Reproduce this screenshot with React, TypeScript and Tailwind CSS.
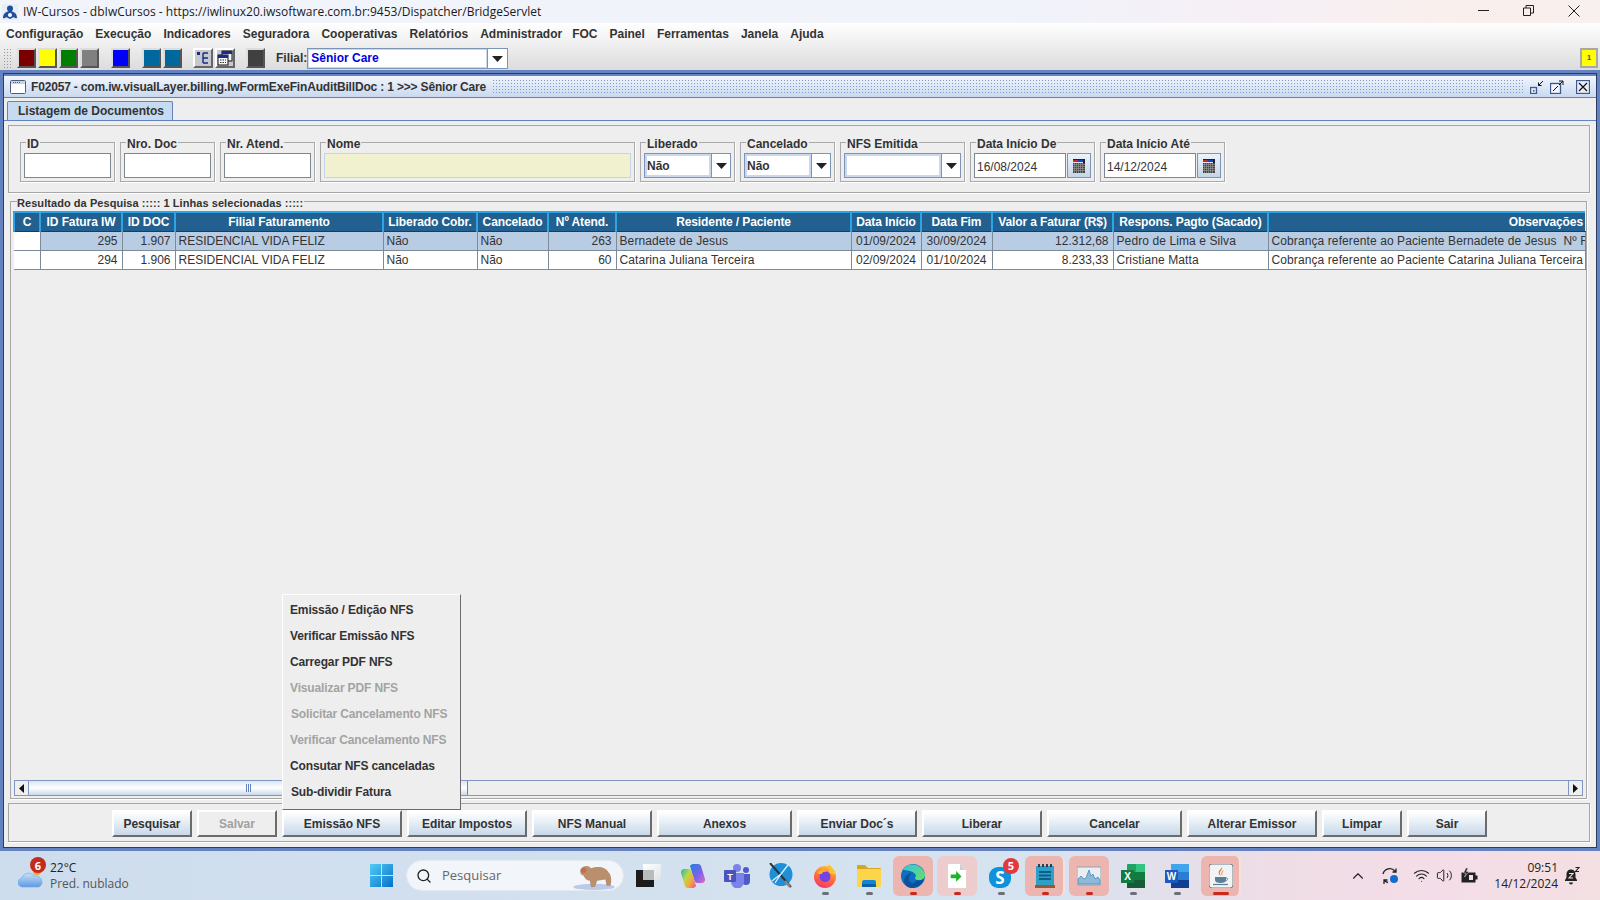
import type { ReactNode } from "react";
import { ChevronUp, Search, Volume2, Wifi } from "lucide-react";

const menus = ["Configuração", "Execução", "Indicadores", "Seguradora", "Cooperativas", "Relatórios", "Administrador", "FOC", "Painel", "Ferramentas", "Janela", "Ajuda"];

const columns = [
  { label: "C", width: 26 },
  { label: "ID Fatura IW", width: 82 },
  { label: "ID DOC", width: 53 },
  { label: "Filial Faturamento", width: 208 },
  { label: "Liberado Cobr.", width: 94 },
  { label: "Cancelado", width: 71 },
  { label: "Nº Atend.", width: 68 },
  { label: "Residente / Paciente", width: 235 },
  { label: "Data Início", width: 70 },
  { label: "Data Fim", width: 71 },
  { label: "Valor a Faturar (R$)", width: 121 },
  { label: "Respons. Pagto (Sacado)", width: 155 },
  { label: "Observações", width: 317 },
];

const rows = [
  ["", "295", "1.907", "RESIDENCIAL VIDA FELIZ", "Não", "Não", "263", "Bernadete de Jesus", "01/09/2024", "30/09/2024", "12.312,68", "Pedro de Lima e Silva", "Cobrança referente ao Paciente Bernadete de Jesus  Nº F"],
  ["", "294", "1.906", "RESIDENCIAL VIDA FELIZ", "Não", "Não", "60", "Catarina Juliana Terceira", "02/09/2024", "01/10/2024", "8.233,33", "Cristiane Matta", "Cobrança referente ao Paciente Catarina Juliana Terceira"],
];
const rightAligned = [1, 2, 6, 10];
const centered = [8, 9];
const wideText = [7, 11, 12];

const buttons = [
  { label: "Pesquisar", width: "w-[80px]" },
  { label: "Salvar", width: "w-[80px]", disabled: true },
  { label: "Emissão NFS", width: "w-[120px]" },
  { label: "Editar Impostos", width: "w-[120px]" },
  { label: "NFS Manual", width: "w-[120px]" },
  { label: "Anexos", width: "w-[135px]" },
  { label: "Enviar Doc´s", width: "w-[120px]" },
  { label: "Liberar", width: "w-[120px]" },
  { label: "Cancelar", width: "w-[135px]" },
  { label: "Alterar Emissor", width: "w-[130px]" },
  { label: "Limpar", width: "w-[80px]" },
  { label: "Sair", width: "w-[80px]" },
];

const popupItems = [
  { label: "Emissão / Edição NFS" },
  { label: "Verificar Emissão NFS" },
  { label: "Carregar PDF NFS" },
  { label: "Visualizar PDF NFS", disabled: true },
  { label: "Solicitar Cancelamento NFS", disabled: true, nudge: true },
  { label: "Verificar Cancelamento NFS", disabled: true },
  { label: "Consutar NFS canceladas" },
  { label: "Sub-dividir Fatura", nudge: true },
];

function Swatch({ color, className = "" }: { color: string; className?: string }) {
  return (
    <div className={`h-[20px] w-[19px] border-2 border-t-[#dddddd] border-l-[#dddddd] border-r-[#555555] border-b-[#555555] ${color} ${className}`} />
  );
}

function ToolIcon({ children, className = "" }: { children: ReactNode; className?: string }) {
  return (
    <div className={`flex h-[20px] w-[20px] items-center justify-center border-2 border-t-white border-l-white border-r-[#666666] border-b-[#666666] bg-[#c4c8cf] ${className}`}>
      {children}
    </div>
  );
}

function ArrowDown() {
  return (
    <svg width="11" height="6" viewBox="0 0 11 6">
      <path d="M0 0h11L5.5 6z" fill="#222" />
    </svg>
  );
}

function Group({ label, width, children }: { label: string; width: string; children: ReactNode }) {
  return (
    <div className={`h-[40px] border border-[#aaaaaa] px-[3px] shadow-[1px_1px_0_#ffffff] ${width}`}>
      <span className="relative -mt-[6px] mb-[2px] ml-[2px] block h-[14px] w-fit bg-[#eeeeee] px-[1px] text-[12px] font-bold leading-[14px] text-[#333333]">
        {label}
      </span>
      {children}
    </div>
  );
}

function TextInput({ tone = "border-[#7c8794] bg-white" }: { tone?: string }) {
  return <div className={`h-[25px] w-full border ${tone}`} />;
}

function Combo({ value = "" }: { value?: string }) {
  return (
    <div className="flex h-[25px] w-full border border-[#7c94b8] bg-white">
      <div className="flex-1 border-2 border-[#c9d8ec] text-[12px] font-bold leading-[20px] text-[#333333]">{value}</div>
      <div className="flex w-[19px] items-center justify-center border-l border-[#7c94b8]">
        <ArrowDown />
      </div>
    </div>
  );
}

function CalendarIcon() {
  return (
    <svg width="14" height="14" viewBox="0 0 14 14">
      <rect x="1" y="0" width="12" height="1" fill="#222" />
      <rect x="1" y="1" width="5" height="2" fill="#d02020" />
      <rect x="6" y="1" width="5" height="2" fill="#2040c0" />
      <rect x="11" y="0" width="2" height="4" fill="#222" />
      <rect x="1" y="4" width="12" height="10" fill="#444" />
      <path d="M1 5.500h12M1 7.500h12M1 9.500h12M1 11.500h12M2.500 4v10M4.500 4v10M6.500 4v10M8.500 4v10M10.500 4v10" stroke="#9c9c9c" strokeWidth="0.6" />
    </svg>
  );
}

function DateField({ value }: { value: string }) {
  return (
    <div className="flex h-[25px] w-full items-stretch gap-[1px]">
      <div className="flex-1 border border-[#7c8794] bg-white pl-[2px] text-[12px] leading-[26px] text-[#333333]">{value}</div>
      <div className="flex w-[24px] items-center justify-center border border-[#7c94b8] bg-gradient-to-b from-[#eef3fa] to-[#c4d5e8]">
        <CalendarIcon />
      </div>
    </div>
  );
}

function Slot({ children, bg, dot, stack, wide }: { children: ReactNode; bg?: string; dot?: string; stack?: boolean; wide?: boolean }) {
  return (
    <div className="relative flex h-[49px] w-[44px] items-center justify-center">
      {stack && <span className="absolute left-[18px] top-[5px] h-[40px] w-[24px] rounded-r-[6px] border-r-[2px] border-white/60 bg-[#ecb5b0]" />}
      {bg && <span className={`absolute top-[5px] h-[40px] rounded-[6px] ${stack ? "left-[2px] w-[34px]" : "left-[2px] w-[40px]"} ${bg}`} />}
      <span className="relative flex items-center justify-center">{children}</span>
      {dot && <span className={`absolute bottom-[5px] h-[3px] rounded-full ${wide ? "w-[16px]" : "w-[7px]"} ${dot}`} />}
    </div>
  );
}

function WinLogo() {
  return (
    <svg width="23" height="23" viewBox="0 0 24 24">
      <defs>
        <linearGradient id="win" x1="0" y1="0" x2="1" y2="1">
          <stop offset="0" stopColor="#52cdf5" />
          <stop offset="1" stopColor="#0570cc" />
        </linearGradient>
      </defs>
      <path d="M0 0h11.5v11.5H0zM12.5 0H24v11.5H12.5zM0 12.5h11.5V24H0zM12.5 12.5H24V24H12.5z" fill="url(#win)" />
    </svg>
  );
}

function TaskView() {
  return (
    <svg width="26" height="24" viewBox="0 0 26 24">
      <defs>
        <linearGradient id="tv" x1="0" y1="0" x2="1" y2="1">
          <stop offset="0" stopColor="#ffffff" />
          <stop offset="1" stopColor="#dfe3e8" />
        </linearGradient>
      </defs>
      <rect x="7" y="0" width="18" height="16" fill="url(#tv)" />
      <rect x="0" y="6" width="18" height="17" fill="#1c1c1c" />
      <rect x="7" y="6" width="11" height="10" fill="#b9bbbd" />
    </svg>
  );
}

function Copilot() {
  return (
    <svg width="24" height="24" viewBox="0 0 24 24">
      <defs>
        <linearGradient id="cp1" x1="0" y1="0.2" x2="1" y2="0.9">
          <stop offset="0" stopColor="#3fbf8f" />
          <stop offset="0.35" stopColor="#bcd84a" />
          <stop offset="0.65" stopColor="#f5a83c" />
          <stop offset="1" stopColor="#ef5a7a" />
        </linearGradient>
        <linearGradient id="cp2" x1="0" y1="0" x2="1" y2="1">
          <stop offset="0" stopColor="#1f7fe0" />
          <stop offset="0.55" stopColor="#7b63e8" />
          <stop offset="1" stopColor="#dc6ac8" />
        </linearGradient>
      </defs>
      <path d="M9 2c1-1.500 2-2 4-2h4c1.500 0 2.500.8 3 2l4 13c.5 2-1 4-3 4h-5c-1 0-2-.7-2.400-2z" fill="url(#cp2)" />
      <path d="M15 22c-1 1.500-2 2-4 2H7c-1.500 0-2.500-.8-3-2L0 9c-.5-2 1-4 3-4h5c1 0 2 .7 2.400 2z" fill="url(#cp1)" />
    </svg>
  );
}

function Teams() {
  return (
    <svg width="26" height="24" viewBox="0 0 26 24">
      <circle cx="13" cy="4" r="4" fill="#7b83eb" />
      <circle cx="22" cy="6" r="3" fill="#5059c9" />
      <path d="M18 10h8v7a4 4 0 0 1-8 0z" fill="#5059c9" />
      <path d="M7 9h13v9a6.500 6.500 0 0 1-13 0z" fill="#7b83eb" />
      <rect x="0" y="6" width="12" height="12" rx="1" fill="#4b53bc" />
      <text x="6" y="15.500" textAnchor="middle" fontSize="9" fontWeight="700" fill="#ffffff" fontFamily="Liberation Sans">T</text>
    </svg>
  );
}

function Tools() {
  return (
    <svg width="24" height="25" viewBox="0 0 24 25">
      <circle cx="12" cy="11.500" r="11.500" fill="#1f8fd8" />
      <path d="M1 0l21 24" stroke="#333" strokeWidth="2" />
      <path d="M12 11L3 18M12 11l7-9M12 11L6 20" stroke="#dcefff" strokeWidth="1.300" />
      <path d="M16 18l5 6" stroke="#888" strokeWidth="2.500" />
    </svg>
  );
}

function Firefox() {
  return (
    <svg width="24" height="24" viewBox="0 0 24 24">
      <defs>
        <linearGradient id="ff" x1="0.7" y1="0" x2="0.3" y2="1">
          <stop offset="0" stopColor="#ffc22e" />
          <stop offset="0.5" stopColor="#ff7139" />
          <stop offset="1" stopColor="#f5326b" />
        </linearGradient>
      </defs>
      <circle cx="12" cy="13" r="11" fill="url(#ff)" />
      <path d="M15 0c3 2 7 6 8 11l-7-2c0-3 0-6-1-9z" fill="#ffc22e" />
      <circle cx="12" cy="12.500" r="5.500" fill="#7542e5" />
      <path d="M4 9c3-4 8-3 10-1-4-1-5 1-5 2-2 0-3 0-5-1z" fill="#ffb02e" />
    </svg>
  );
}

function Folder() {
  return (
    <svg width="24" height="24" viewBox="0 0 24 24">
      <path d="M0 2a1 1 0 0 1 1-1h7l3 3h12a1 1 0 0 1 1 1v2H0z" fill="#d9a520" />
      <path d="M0 5h24v17a1 1 0 0 1-1 1H1a1 1 0 0 1-1-1z" fill="#fdd54a" />
      <path d="M5 23v-5a2 2 0 0 1 2-2h10a2 2 0 0 1 2 2v5z" fill="#1187d4" />
      <rect x="5" y="20" width="14" height="3" fill="#0a5fa8" />
    </svg>
  );
}

function Edge() {
  return (
    <svg width="24" height="24" viewBox="0 0 24 24">
      <defs>
        <linearGradient id="edgeA" x1="0" y1="0" x2="1" y2="1">
          <stop offset="0" stopColor="#36c6d8" />
          <stop offset="1" stopColor="#6ade6a" />
        </linearGradient>
      </defs>
      <circle cx="12" cy="12" r="12" fill="#0d6fc0" />
      <path d="M2 6C6-2 20-2 24 10c.5 5-4 7-8 6-3-1-2-3-1-4 0-4-8-6-13-6z" fill="url(#edgeA)" />
      <path d="M16 16c3 1 6 0 7-2-1 6-7 10-12 10-4 0-8-3-8-8 1-4 4-7 8-7-2 1-3 3-3 6 0 5 5 5 8 1z" fill="#0b4f9e" />
    </svg>
  );
}

function DocArrow() {
  return (
    <svg width="18" height="24" viewBox="0 0 18 24">
      <path d="M0 0h12l6 6v18H0z" fill="#ffffff" />
      <path d="M12 0l6 6h-6z" fill="#cfcfcf" />
      <path d="M3 14h6v-4l6 6-6 6v-4H3z" fill="#1db324" transform="translate(0 -2) scale(.9)" />
    </svg>
  );
}

function Skype() {
  return (
    <div className="relative h-[24px] w-[24px]">
      <span className="absolute left-0 top-[3px] flex h-[21px] w-[22px] items-center justify-center rounded-[9px] bg-[#0e92dc] text-[17px] font-bold leading-none text-white">S</span>
      <span className="absolute -right-[6px] -top-[6px] flex h-[16px] w-[16px] items-center justify-center rounded-full bg-[#e23a3a] text-[11px] font-bold leading-none text-white">5</span>
    </div>
  );
}

function Notes() {
  return (
    <svg width="20" height="24" viewBox="0 0 20 24">
      <rect x="1" y="2" width="18" height="20" fill="#2ca0c8" />
      <path d="M4 0v3M8 0v3M12 0v3M16 0v3" stroke="#123" strokeWidth="1.600" />
      <path d="M4 8h12M4 11.500h12M4 15h12" stroke="#0c5f85" strokeWidth="2" />
      <rect x="0" y="21" width="20" height="3" fill="#9c5a28" />
    </svg>
  );
}

function Monitor() {
  return (
    <svg width="24" height="24" viewBox="0 0 24 24">
      <rect x="0" y="3" width="24" height="18" fill="#e8eef2" stroke="#8fa3ad" />
      <path d="M1 20V15l3-3 3 3 2-1 3-8 2 6 2-2 2 5 3-2 2 3v4z" fill="#8db8d8" stroke="#4a8bbc" strokeWidth=".8" />
    </svg>
  );
}

function Excel() {
  return (
    <svg width="24" height="24" viewBox="0 0 24 24">
      <rect x="6" y="0" width="18" height="24" rx="1" fill="#21a366" />
      <rect x="15" y="0" width="9" height="8" fill="#33c481" />
      <rect x="6" y="8" width="18" height="8" fill="#107c41" />
      <rect x="6" y="16" width="18" height="8" fill="#185c37" />
      <rect x="0" y="6" width="13" height="13" fill="#107c41" />
      <text x="6.500" y="16" textAnchor="middle" fontSize="10" fontWeight="700" fill="#ffffff" fontFamily="Liberation Sans">X</text>
    </svg>
  );
}

function Word() {
  return (
    <svg width="24" height="24" viewBox="0 0 24 24">
      <rect x="6" y="0" width="18" height="24" rx="1" fill="#2b7cd3" />
      <rect x="6" y="0" width="18" height="8" fill="#41a5ee" />
      <rect x="6" y="16" width="18" height="8" fill="#103f91" />
      <rect x="0" y="6" width="13" height="13" fill="#185abd" />
      <text x="6.500" y="16" textAnchor="middle" fontSize="10" fontWeight="700" fill="#ffffff" fontFamily="Liberation Sans">W</text>
    </svg>
  );
}

function Java() {
  return (
    <svg width="24" height="24" viewBox="0 0 24 24">
      <rect x="0" y="0" width="24" height="24" rx="3" fill="#f1f3f5" stroke="#6f7f8b" />
      <path d="M13 3c1 3-3 4-2 7 .5 1 1 1.500 1 2-2-1-3-3-2-5 .5-1.500 2.500-2 3-4z" fill="#e8762d" />
      <path d="M15 6c-1 2-3 3-1 6-2-1-2-3-1-4.500.5-.5 1.500-1 2-1.500z" fill="#e8762d" />
      <path d="M6 13h11v3c0 2-2 3-5.500 3S6 18 6 16z" fill="#5a7f96" />
      <path d="M17 14c2 0 2 2.500-.5 3" stroke="#5a7f96" fill="none" />
      <path d="M4 20.500h15" stroke="#5a7f96" strokeWidth="1.200" />
    </svg>
  );
}

function Cloud() {
  return (
    <svg width="26" height="22" viewBox="0 0 26 22">
      <defs>
        <linearGradient id="cl" x1="0" y1="0" x2="0" y2="1">
          <stop offset="0" stopColor="#c8e0f8" />
          <stop offset="1" stopColor="#5e9ae0" />
        </linearGradient>
      </defs>
      <circle cx="19" cy="5" r="4" fill="#f0a030" />
      <path d="M5 21a4.500 4.500 0 0 1-1-9c1-5 9-7 12-2 4-1 8 2 8 6 0 3-2 5-4 5z" fill="url(#cl)" stroke="#6ea4e4" strokeWidth=".6" />
    </svg>
  );
}

function BatteryIcon() {
  return (
    <svg width="17" height="16" viewBox="0 0 17 16">
      <rect x="1" y="5" width="13" height="9" fill="#222" stroke="#222" />
      <rect x="3" y="7" width="9" height="5" fill="#f3dde6" />
      <rect x="3" y="7" width="5" height="5" fill="#222" />
      <rect x="14" y="7.500" width="2.500" height="4" fill="#222" />
      <path d="M5 0L2.500 5H5L3.500 9 8 3.500H5.500L7 0z" fill="#222" stroke="#f3dde6" strokeWidth=".5" />
    </svg>
  );
}

function BellZz() {
  return (
    <svg width="16" height="18" viewBox="0 0 16 18">
      <path d="M7 2.500c-3 0-4.500 2.300-4.500 5v3L1 13v1h12v-1l-1.500-2.500v-3c0-2.700-1.500-5-4.500-5z" fill="#222" />
      <path d="M5 15.500h4c0 1-1 2-2 2s-2-1-2-2z" fill="#222" />
      <path d="M5 6.500h4l-4 4.500h4" fill="none" stroke="#f3e0e2" strokeWidth="1.100" />
      <path d="M11.500.5h3.500l-3.500 4h3.500" fill="none" stroke="#222" strokeWidth="1.100" />
    </svg>
  );
}

export default function App() {
  return (
    <div className="relative flex h-[900px] w-[1600px] flex-col overflow-hidden bg-[#eeeeee] font-['Liberation_Sans',Arial,sans-serif]">
      {/* window title bar */}
      <div className="flex h-[23px] shrink-0 items-center bg-[linear-gradient(90deg,#f1f4fa_0%,#f1f3fa_65%,#f6eff5_80%,#f9efed_90%,#f8f0ee_100%)] font-['Open_Sans',sans-serif] text-[12px] text-[#1a1a1a]">
        <svg className="ml-[2px] mr-[5px]" width="16" height="16" viewBox="0 0 16 16">
          <rect width="16" height="16" fill="#e8eef6" />
          <circle cx="8" cy="4.500" r="3" fill="#1f4f9e" />
          <path d="M1 14c0-5 4-7 7-7s7 2 7 7c-2 1-3-1-3-1l-4 2-4-2s-1 2-3 1z" fill="#1f4f9e" />
          <circle cx="8" cy="11" r="2" fill="#ffffff" />
        </svg>
        <span>IW-Cursos - dbIwCursos - https://iwlinux20.iwsoftware.com.br:9453/Dispatcher/BridgeServlet</span>
        <div className="ml-auto mr-[3px] flex h-full pb-[2px]">
          <div className="flex w-[45px] items-center justify-center">
            <svg width="11" height="11" viewBox="0 0 11 11"><path d="M0 5.500h11" stroke="#222" /></svg>
          </div>
          <div className="flex w-[45px] items-center justify-center">
            <svg width="11" height="11" viewBox="0 0 11 11"><path d="M.5 3h7v7.500h-7zM3 3V.5h7.500V8H8" fill="none" stroke="#222" /></svg>
          </div>
          <div className="flex w-[46px] items-center justify-center">
            <svg width="12" height="12" viewBox="0 0 12 12"><path d="M.5.5l11 11M11.500.5l-11 11" stroke="#222" /></svg>
          </div>
        </div>
      </div>

      {/* menu and toolbar */}
      <div className="h-[47px] shrink-0 bg-gradient-to-b from-white to-[#dcdcdc]">
        <div className="flex h-[25px] items-center gap-[12px] pb-[4px] pl-[6px] text-[12px] font-bold text-[#333333]">
          {menus.map((m) => (
            <span key={m} className={m === "FOC" ? "-ml-[2px]" : ""}>{m}</span>
          ))}
        </div>
        <div className="flex h-[20px] items-start pl-[3px]">
          <div className="mr-[5px] h-[20px] w-[9px] bg-[radial-gradient(#9a9a9a_0.8px,transparent_1px)] bg-[length:3px_3px]" />
          <Swatch color="bg-[#7a0000]" />
          <Swatch color="bg-[#ffff00]" className="ml-[2px]" />
          <Swatch color="bg-[#008000]" className="ml-[2px]" />
          <Swatch color="bg-[#808080]" className="ml-[2px]" />
          <Swatch color="bg-[#0000ff]" className="ml-[12px]" />
          <Swatch color="bg-[#00689c]" className="ml-[12px]" />
          <Swatch color="bg-[#00689c]" className="ml-[2px]" />
          <ToolIcon className="ml-[11px]">
            <svg width="12" height="14" viewBox="0 0 12 14">
              <path d="M0 1h3v3H0z" fill="#1a2a80" />
              <path d="M6 2h5M6 2v10M6 7h5M6 12h5" fill="none" stroke="#1a2a80" strokeWidth="1.400" />
            </svg>
          </ToolIcon>
          <ToolIcon className="ml-[2px]">
            <svg width="16" height="16" viewBox="0 0 16 16">
              <rect x="5" y="1" width="10" height="10" fill="#f4f4f4" stroke="#111" />
              <rect x="5" y="1" width="10" height="3" fill="#1a2a90" />
              <rect x="1" y="5" width="10" height="10" fill="#f4f4f4" stroke="#111" />
              <rect x="1" y="5" width="10" height="3" fill="#1a2a90" />
              <path d="M3 10h6M3 12.500h6" stroke="#333" strokeDasharray="1.500 1" />
            </svg>
          </ToolIcon>
          <Swatch color="bg-[#404040]" className="ml-[11px]" />
          <span className="ml-[11px] text-[12px] font-bold leading-[20px] text-[#333333]">Filial:</span>
          <div className="flex h-[21px] w-[201px] border border-[#7c94b8] bg-white">
            <div className="flex-1 border border-[#c9d8ec] pl-[2px] text-[12px] font-bold leading-[17px] text-[#0000e0]">Sênior Care</div>
            <div className="flex w-[20px] items-center justify-center border-l border-[#7c94b8]">
              <ArrowDown />
            </div>
          </div>
          <div className="ml-auto mr-[2px] flex h-[20px] w-[18px] items-center justify-center border-2 border-[#a8a8a8] bg-[#ffff00] text-[8px] font-bold text-[#555555]">1</div>
        </div>
      </div>

      {/* internal frame */}
      <div className="flex min-h-0 flex-1 flex-col border-[3px] border-[#6382bf]">
        <div className="flex min-h-0 flex-1 flex-col border border-[#2c3d63] bg-[#eeeeee]">
          <div className="flex h-[24px] shrink-0 items-center border-y-2 border-b border-t-[#6382bf] border-b-[#6382bf] bg-gradient-to-b from-[#f2f6fc] to-[#c9d9ef] pl-[6px] text-[12px] font-bold text-[#333333]">
            <svg width="16" height="14" viewBox="0 0 16 14" className="mr-[5px]">
              <rect x=".5" y=".5" width="15" height="13" rx="1" fill="#ffffff" stroke="#50607a" />
              <rect x="1" y="1" width="14" height="3" fill="#c6d4e6" />
              <path d="M3 2.500h8" stroke="#50607a" strokeDasharray="1 1" />
            </svg>
            <span className="pt-[1px] tracking-[-0.17px]">F02057 - com.iw.visualLayer.billing.IwFormExeFinAuditBillDoc : 1 &gt;&gt;&gt; Sênior Care</span>
            <div className="ml-[6px] h-[15px] flex-1 bg-[radial-gradient(#7f9ccf_0.8px,transparent_1px)] bg-[length:3px_3px]" />
            <div className="ml-[5px] flex items-center">
              <svg width="14" height="14" viewBox="0 0 14 14">
                <rect x=".5" y="7.500" width="6" height="6" fill="#dfe8f5" stroke="#41588a" strokeWidth="1.300" />
                <rect x="3" y="10" width="1.500" height="1.500" fill="#41588a" />
                <path d="M13 1L8.500 5.500M8.500 2.500v3h3" fill="none" stroke="#111" />
              </svg>
              <svg width="14" height="14" viewBox="0 0 14 14" className="ml-[6px]">
                <rect x=".5" y="3.500" width="10" height="10" fill="#f2f6fc" stroke="#41588a" strokeWidth="1.300" />
                <path d="M3 11l5-5M9 1h4v4M13 1L9 5" fill="none" stroke="#111" />
              </svg>
              <svg width="14" height="14" viewBox="0 0 14 14" className="ml-[12px] mr-[6px]">
                <rect x=".5" y=".5" width="13" height="13" fill="#e8eef8" stroke="#41588a" strokeWidth="1.300" />
                <path d="M3 3l8 8M11 3l-8 8" stroke="#111" strokeWidth="1.200" />
              </svg>
            </div>
          </div>

          <div className="flex h-[22px] shrink-0 items-end pl-[3px]">
            <div className="flex h-[19px] w-[166px] items-center rounded-t-[2px] border border-b-0 border-[#6382bf] bg-[#c6daf0] pl-[10px] text-[12px] font-bold text-[#333333]">
              Listagem de Documentos
            </div>
          </div>

          <div className="flex min-h-0 flex-1 flex-col border-t border-[#6382bf] pl-[4px] pr-[6px] pt-[4px]">
            <div className="flex h-[68px] shrink-0 gap-[5px] border border-[#a6a6a6] pl-[11px] pt-[16px] shadow-[1px_1px_0_#ffffff]">
              <Group label="ID" width="w-[95px]"><TextInput /></Group>
              <Group label="Nro. Doc" width="w-[95px]"><TextInput /></Group>
              <Group label="Nr. Atend." width="w-[95px]"><TextInput /></Group>
              <Group label="Nome" width="w-[315px]"><TextInput tone="border-[#c5d5e8] bg-[#f1f1cf]" /></Group>
              <Group label="Liberado" width="w-[95px]"><Combo value="Não" /></Group>
              <Group label="Cancelado" width="w-[95px]"><Combo value="Não" /></Group>
              <Group label="NFS Emitida" width="w-[125px]"><Combo /></Group>
              <Group label="Data Início De" width="w-[125px]"><DateField value="16/08/2024" /></Group>
              <Group label="Data Início Até" width="w-[125px]"><DateField value="14/12/2024" /></Group>
            </div>

            <div className="ml-[2px] mr-[3px] mt-[8px] flex min-h-0 flex-1 flex-col border border-[#a6a6a6] pl-[2px] pr-[2px] shadow-[1px_1px_0_#ffffff]">
              <span className="relative -mt-[6px] ml-[4px] block h-[14px] w-fit bg-[#eeeeee] pr-[1px] text-[11px] font-bold leading-[14px] tracking-[0.06px] text-[#333333]">
                Resultado da Pesquisa ::::: 1 Linhas selecionadas :::::
              </span>
              <table className="mt-[1px] w-[1571px] table-fixed border-collapse text-[12px] text-[#333333]">
                <colgroup>
                  {columns.map((c) => (
                    <col key={c.label} style={{ width: c.width }} />
                  ))}
                </colgroup>
                <thead>
                  <tr>
                    {columns.map((c, i) => (
                      <th
                        key={c.label}
                        className={`h-[19px] overflow-hidden whitespace-nowrap border-l-2 border-t-2 border-b border-l-[#2ba5e8] border-t-[#2ba5e8] border-b-[#123f66] bg-[#21608f] p-0 text-[12px] font-bold tracking-[-0.1px] text-white ${i === columns.length - 1 ? "pr-[2px] text-right" : "text-center"}`}
                      >
                        {c.label}
                      </th>
                    ))}
                  </tr>
                </thead>
                <tbody>
                  {rows.map((row, r) => (
                    <tr key={r} className={r === 0 ? "bg-[#b8cce4]" : "bg-white"}>
                      {row.map((cell, i) => (
                        <td
                          key={i}
                          className={`h-[19px] overflow-hidden whitespace-pre border-b border-r border-[#7d8b99] py-0 leading-[18px] ${i === 0 ? "bg-white" : ""} ${rightAligned.includes(i) ? "px-[4px] text-right" : centered.includes(i) ? "px-0 text-center" : "px-[3px] text-left"} ${wideText.includes(i) ? "tracking-[0.1px]" : ""}`}
                        >
                          {cell}
                        </td>
                      ))}
                    </tr>
                  ))}
                </tbody>
              </table>

              <div className="mb-[2px] ml-[1px] mt-auto flex h-[16px] w-[1569px] border-y border-[#7f97c2]">
                <div className="flex w-[15px] items-center justify-center border-x border-[#7f97c2] bg-[#eeeeee]">
                  <svg width="5" height="9" viewBox="0 0 5 9"><path d="M5 0v9L0 4.500z" fill="#111" /></svg>
                </div>
                <div className="flex w-[439px] items-center justify-center border-r border-[#6382bf] bg-gradient-to-b from-[#dbe6f3] via-white to-[#c9d9ea]">
                  <div className="h-[8px] w-[5px] border-x border-[#6382bf] bg-[linear-gradient(90deg,transparent_40%,#6382bf_40%,#6382bf_60%,transparent_60%)]" />
                </div>
                <div className="flex-1" />
                <div className="flex w-[15px] items-center justify-center border-x border-[#7f97c2] bg-[#eeeeee]">
                  <svg width="5" height="9" viewBox="0 0 5 9"><path d="M0 0v9l5-4.500z" fill="#111" /></svg>
                </div>
              </div>
            </div>

            <div className="mb-[5px] mt-[4px] flex h-[39px] shrink-0 gap-[5px] border border-[#a6a6a6] pl-[103px] pt-[6px] shadow-[1px_1px_0_#ffffff]">
              {buttons.map((b) => (
                <button
                  key={b.label}
                  type="button"
                  className={`h-[27px] border-2 border-t-white border-l-white border-r-[#6b6b6b] border-b-[#6b6b6b] text-[12px] font-bold tracking-[-0.04px] ${b.width} ${b.disabled ? "bg-[#eeeeee] text-[#a0a0a0]" : "bg-gradient-to-b from-white to-[#c8d9ea] text-[#333333]"}`}
                >
                  {b.label}
                </button>
              ))}
            </div>
          </div>
        </div>
      </div>

      {/* taskbar */}
      <div className="flex h-[49px] shrink-0 items-center bg-[linear-gradient(90deg,#cedded_0%,#d6e3f0_65%,#efdde6_80%,#f4dde8_90%,#f3e0e2_100%)] font-['Open_Sans',sans-serif] text-[12px] text-[#222222]">
        <div className="relative ml-[18px] mr-[6px] h-[49px] w-[26px]">
          <div className="absolute left-0 top-[15px]"><Cloud /></div>
          <span className="absolute left-[12px] top-[6px] flex h-[16px] w-[16px] items-center justify-center rounded-full bg-[#c42b1c] text-[11px] font-bold leading-none text-white">6</span>
        </div>
        <div className="w-[306px] leading-[16px]">
          <div>22°C</div>
          <div className="text-[#555555]">Pred. nublado</div>
        </div>

        <div className="flex w-[50px] justify-center"><WinLogo /></div>

        <div className="relative flex h-[31px] w-[218px] items-center overflow-hidden rounded-full border border-[#e4e9f0] bg-[#f2f5f9] pl-[9px] text-[13px] text-[#666666]">
          <Search size={16} className="mr-[10px] text-[#222222]" strokeWidth={2} />
          <span>Pesquisar</span>
          {/* search highlight art */}
          <svg className="absolute right-[6px] top-[2px]" width="46" height="27" viewBox="0 0 42 26">
            <ellipse cx="21" cy="23" rx="20" ry="3" fill="#b9cbe8" />
            <path d="M8 6c3-4 8-4 10-1 6-2 14-2 17 4 3 3 3 8 2 13h-4l-1-6-8 1-2 6h-4l-1-6c-3 0-5-2-6-5-2 0-4-2-3-6z" fill="#b98f6d" />
            <circle cx="11" cy="7" r="2.500" fill="#c46a5a" />
          </svg>
        </div>

        <div className="ml-[3px] flex">
          <Slot><TaskView /></Slot>
          <Slot><Copilot /></Slot>
          <Slot><Teams /></Slot>
          <Slot><Tools /></Slot>
          <Slot dot="bg-[#6b7078]"><Firefox /></Slot>
          <Slot dot="bg-[#6b7078]"><Folder /></Slot>
          <Slot bg="bg-[#ecb5b0]" dot="bg-[#c8281e]"><Edge /></Slot>
          <Slot bg="bg-[#eccccc]" dot="bg-[#c8281e]"><DocArrow /></Slot>
          <Slot dot="bg-[#6b7078]"><Skype /></Slot>
          <Slot bg="bg-[#ecb5b0]" dot="bg-[#c8281e]" stack><Notes /></Slot>
          <Slot bg="bg-[#ecb5b0]" dot="bg-[#c8281e]"><Monitor /></Slot>
          <Slot dot="bg-[#6b7078]"><Excel /></Slot>
          <Slot dot="bg-[#6b7078]"><Word /></Slot>
          <Slot bg="bg-[#ecb5b0]" dot="bg-[#c8281e]" stack wide><Java /></Slot>
        </div>

        <ChevronUp size={18} className="ml-[106px]" strokeWidth={1.5} />
        <svg className="ml-[14px]" width="18" height="18" viewBox="0 0 18 18" fill="none" stroke="#222" strokeWidth="1.300">
          <path d="M2 7a7 7 0 0 1 12-3l1 1M15 1.500V5h-3.500M3 13l1 1a6 6 0 0 0 3 1.500M3 17v-4h3.500" />
          <circle cx="13" cy="12" r="4" fill="#0f6cd4" stroke="none" />
        </svg>
        <Wifi size={17} className="ml-[14px]" strokeWidth={1.5} />
        <Volume2 size={17} className="ml-[6px]" strokeWidth={1.4} />
        <div className="ml-[8px]"><BatteryIcon /></div>
        <div className="ml-auto text-right leading-[16px]">
          <div>09:51</div>
          <div>14/12/2024</div>
        </div>
        <div className="ml-[6px] mr-[20px]"><BellZz /></div>
      </div>

      {/* popup of Emissão NFS */}
      <div className="absolute left-[282px] top-[594px] flex h-[216px] w-[179px] flex-col border border-t-white border-l-white border-r-[#6b6b6b] border-b-[#6b6b6b] bg-[#eeeeee] py-[2px] pl-[7px] text-[12px] font-bold tracking-[-0.14px] text-[#333333]">
        {popupItems.map((item) => (
          <div key={item.label} className={`flex h-[26px] shrink-0 items-center ${item.disabled ? "text-[#a3a3a3]" : ""} ${item.nudge ? "pl-[1px]" : ""}`}>
            {item.label}
          </div>
        ))}
      </div>
    </div>
  );
}
